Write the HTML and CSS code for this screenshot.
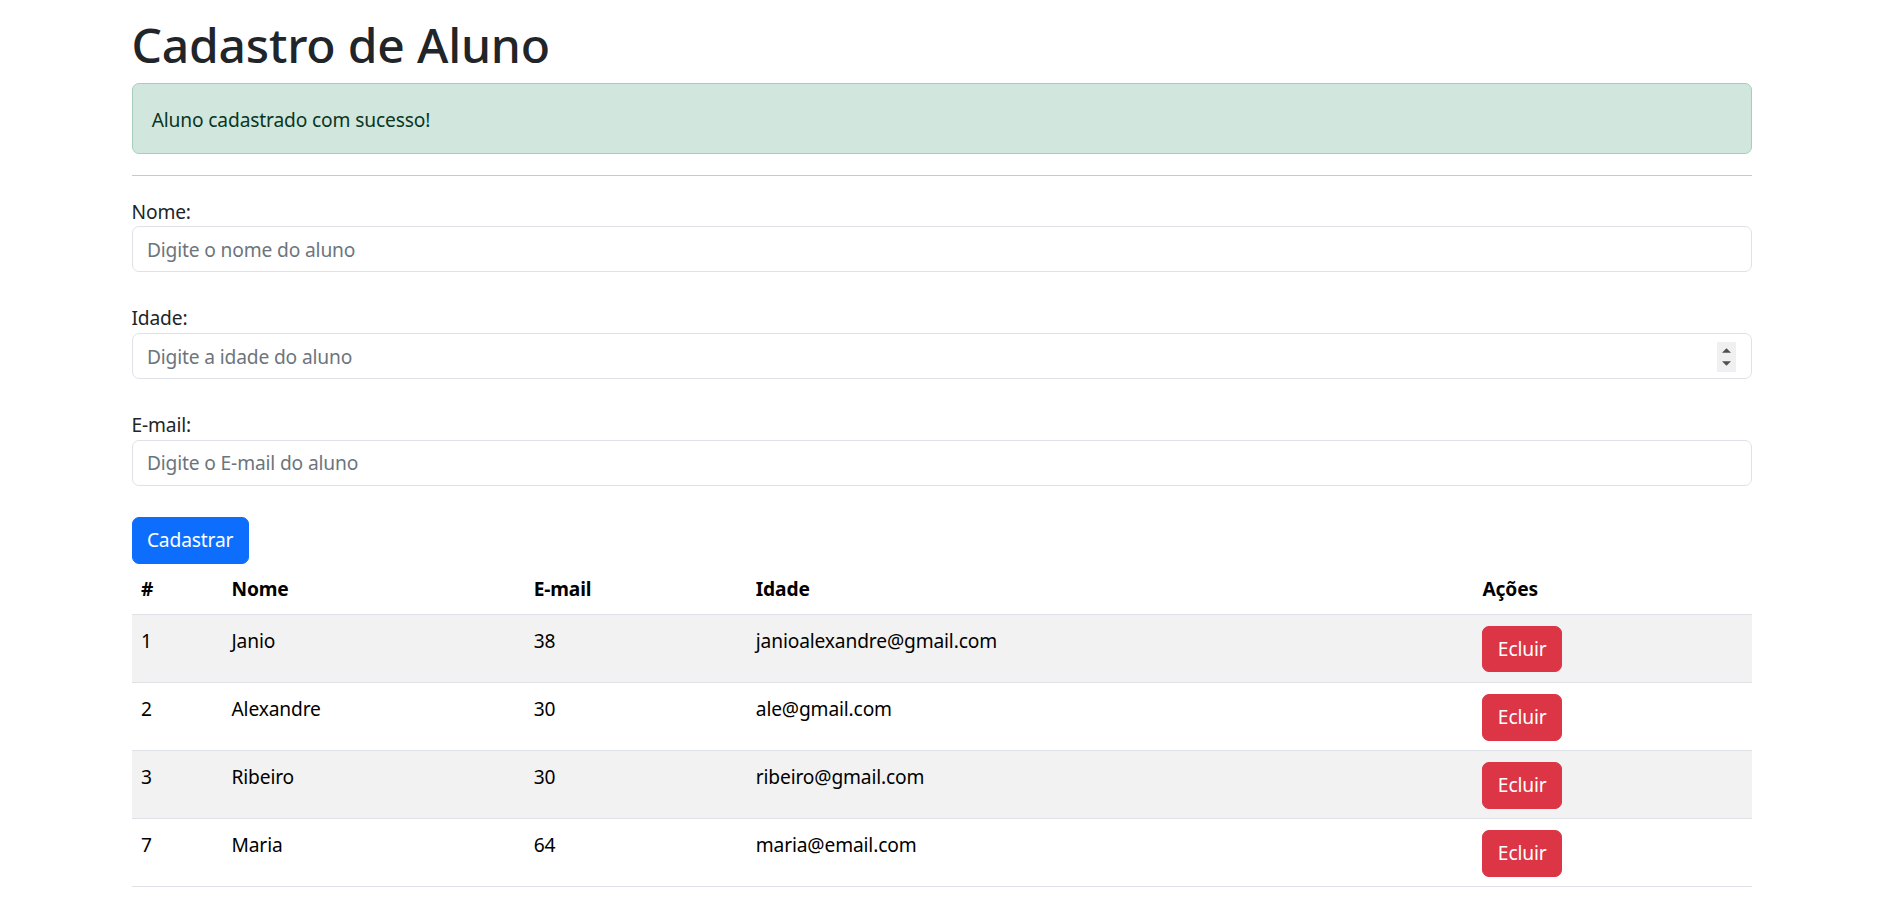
FILE: index.html
```html
<!DOCTYPE html>
<html lang="pt-BR">
<head>
<meta charset="utf-8">
<title>Cadastro de Aluno</title>
<link rel="stylesheet" href="styles.css">
</head>
<body>
<div class="container">
  <h1 class="title">Cadastro de Aluno</h1>
  <div class="alert">Aluno cadastrado com sucesso!</div>
  <hr class="divider">
  <form class="form">
    <div class="group">
      <label class="label" for="nome">Nome:</label>
      <input class="input" id="nome" type="text" placeholder="Digite o nome do aluno">
    </div>
    <div class="group">
      <label class="label" for="idade">Idade:</label>
      <div class="number-wrap">
        <input class="input" id="idade" type="number" placeholder="Digite a idade do aluno">
        <span class="spinner" aria-hidden="true">
          <svg width="19" height="30" viewBox="0 0 19 30"><rect width="19" height="30" fill="#f0f0f0"/><polygon points="5,10.8 14,10.8 9.5,6.3" fill="#505050"/><polygon points="5,19.2 14,19.2 9.5,23.7" fill="#505050"/></svg>
        </span>
      </div>
    </div>
    <div class="group group-last">
      <label class="label" for="email">E-mail:</label>
      <input class="input" id="email" type="email" placeholder="Digite o E-mail do aluno">
    </div>
    <button type="button" class="btn btn-primary">Cadastrar</button>
  </form>
  <table class="table">
    <colgroup>
      <col class="c1"><col class="c2"><col class="c3"><col class="c4"><col class="c5">
    </colgroup>
    <thead>
      <tr><th>#</th><th>Nome</th><th>E-mail</th><th>Idade</th><th>Ações</th></tr>
    </thead>
    <tbody>
      <tr class="striped"><td>1</td><td>Janio</td><td>38</td><td>janioalexandre@gmail.com</td><td class="actions"><button type="button" class="btn btn-danger">Ecluir</button></td></tr>
      <tr><td>2</td><td>Alexandre</td><td>30</td><td>ale@gmail.com</td><td class="actions"><button type="button" class="btn btn-danger">Ecluir</button></td></tr>
      <tr class="striped"><td>3</td><td>Ribeiro</td><td>30</td><td>ribeiro@gmail.com</td><td class="actions"><button type="button" class="btn btn-danger">Ecluir</button></td></tr>
      <tr><td>7</td><td>Maria</td><td>64</td><td>maria@email.com</td><td class="actions"><button type="button" class="btn btn-danger">Ecluir</button></td></tr>
    </tbody>
  </table>
</div>
</body>
</html>
```

FILE: styles.css
```css
html, body {
  margin: 0;
  padding: 0;
  background: #fff;
}
body {
  font-family: "Noto Sans", "Open Sans", sans-serif;
  font-size: 19.2px;
  line-height: 28.8px;
  letter-spacing: -0.15px;
  color: #212529;
}
.container {
  width: 1620px;
  margin: 0 auto;
  padding-top: 15.6px;
}
.title {
  margin: 0 0 9.6px;
  font-size: 48px;
  line-height: 57.6px;
  font-weight: 500;
  letter-spacing: -0.2px;
  color: #212529;
}
.alert {
  border: 1px solid #a3cfbb;
  background: #d1e7dd;
  color: #0a3622;
  border-radius: 7px;
  padding: 22px 19.2px 18px;
  margin-bottom: 21px;
}
.divider {
  margin: 0;
  border: 0;
  border-top: 1px solid #c8c9ca;
  margin-bottom: 22px;
}
.form {
  margin: 0;
}
.group {
  margin-bottom: 32px;
}
.group-last {
  margin-bottom: 31.5px;
}
.label {
  display: block;
  margin-bottom: 0;
}
.input {
  display: block;
  box-sizing: border-box;
  width: 100%;
  height: 46px;
  margin: 0;
  padding: 7.2px 14.4px;
  font: inherit;
  letter-spacing: inherit;
  color: #212529;
  background: #fff;
  border: 1px solid #dee2e6;
  border-radius: 7px;
  outline: none;
}
.input::placeholder {
  color: #6c757d;
  opacity: 1;
}
.input::-webkit-outer-spin-button,
.input::-webkit-inner-spin-button {
  -webkit-appearance: none;
  margin: 0;
}
.input[type=number] {
  -moz-appearance: textfield;
}
.number-wrap {
  position: relative;
}
.spinner {
  position: absolute;
  right: 16px;
  top: 9px;
  width: 19px;
  height: 30px;
  display: block;
}
.spinner svg {
  display: block;
}
.btn {
  display: inline-block;
  box-sizing: border-box;
  height: 46.7px;
  padding: 7.6px 14.4px;
  font: inherit;
  letter-spacing: inherit;
  line-height: 28.8px;
  color: #fff;
  border: 1px solid transparent;
  border-radius: 7px;
  cursor: pointer;
  vertical-align: top;
}
.btn-primary {
  background: #0d6efd;
  border-color: #0d6efd;
}
.btn-danger {
  background: #dc3545;
  border-color: #dc3545;
}
.table {
  width: 100%;
  margin-top: 1.6px;
  border-collapse: collapse;
  table-layout: fixed;
  color: #000;
}
.c1 { width: 90.4px; }
.c2 { width: 302.2px; }
.c3 { width: 222.1px; }
.c4 { width: 726.7px; }
.c5 { width: 278.6px; }
.table th,
.table td {
  text-align: left;
  vertical-align: top;
  border-bottom: 1px solid #dee2e6;
}
.table th {
  padding: 9.6px;
  font-weight: 700;
}
.table td {
  padding: 12px 9.6px 8.5px;
}
.table td.actions {
  padding-top: 11px;
  padding-bottom: 9.5px;
}
.table tr.striped td {
  background: #f2f2f2;
}
```
